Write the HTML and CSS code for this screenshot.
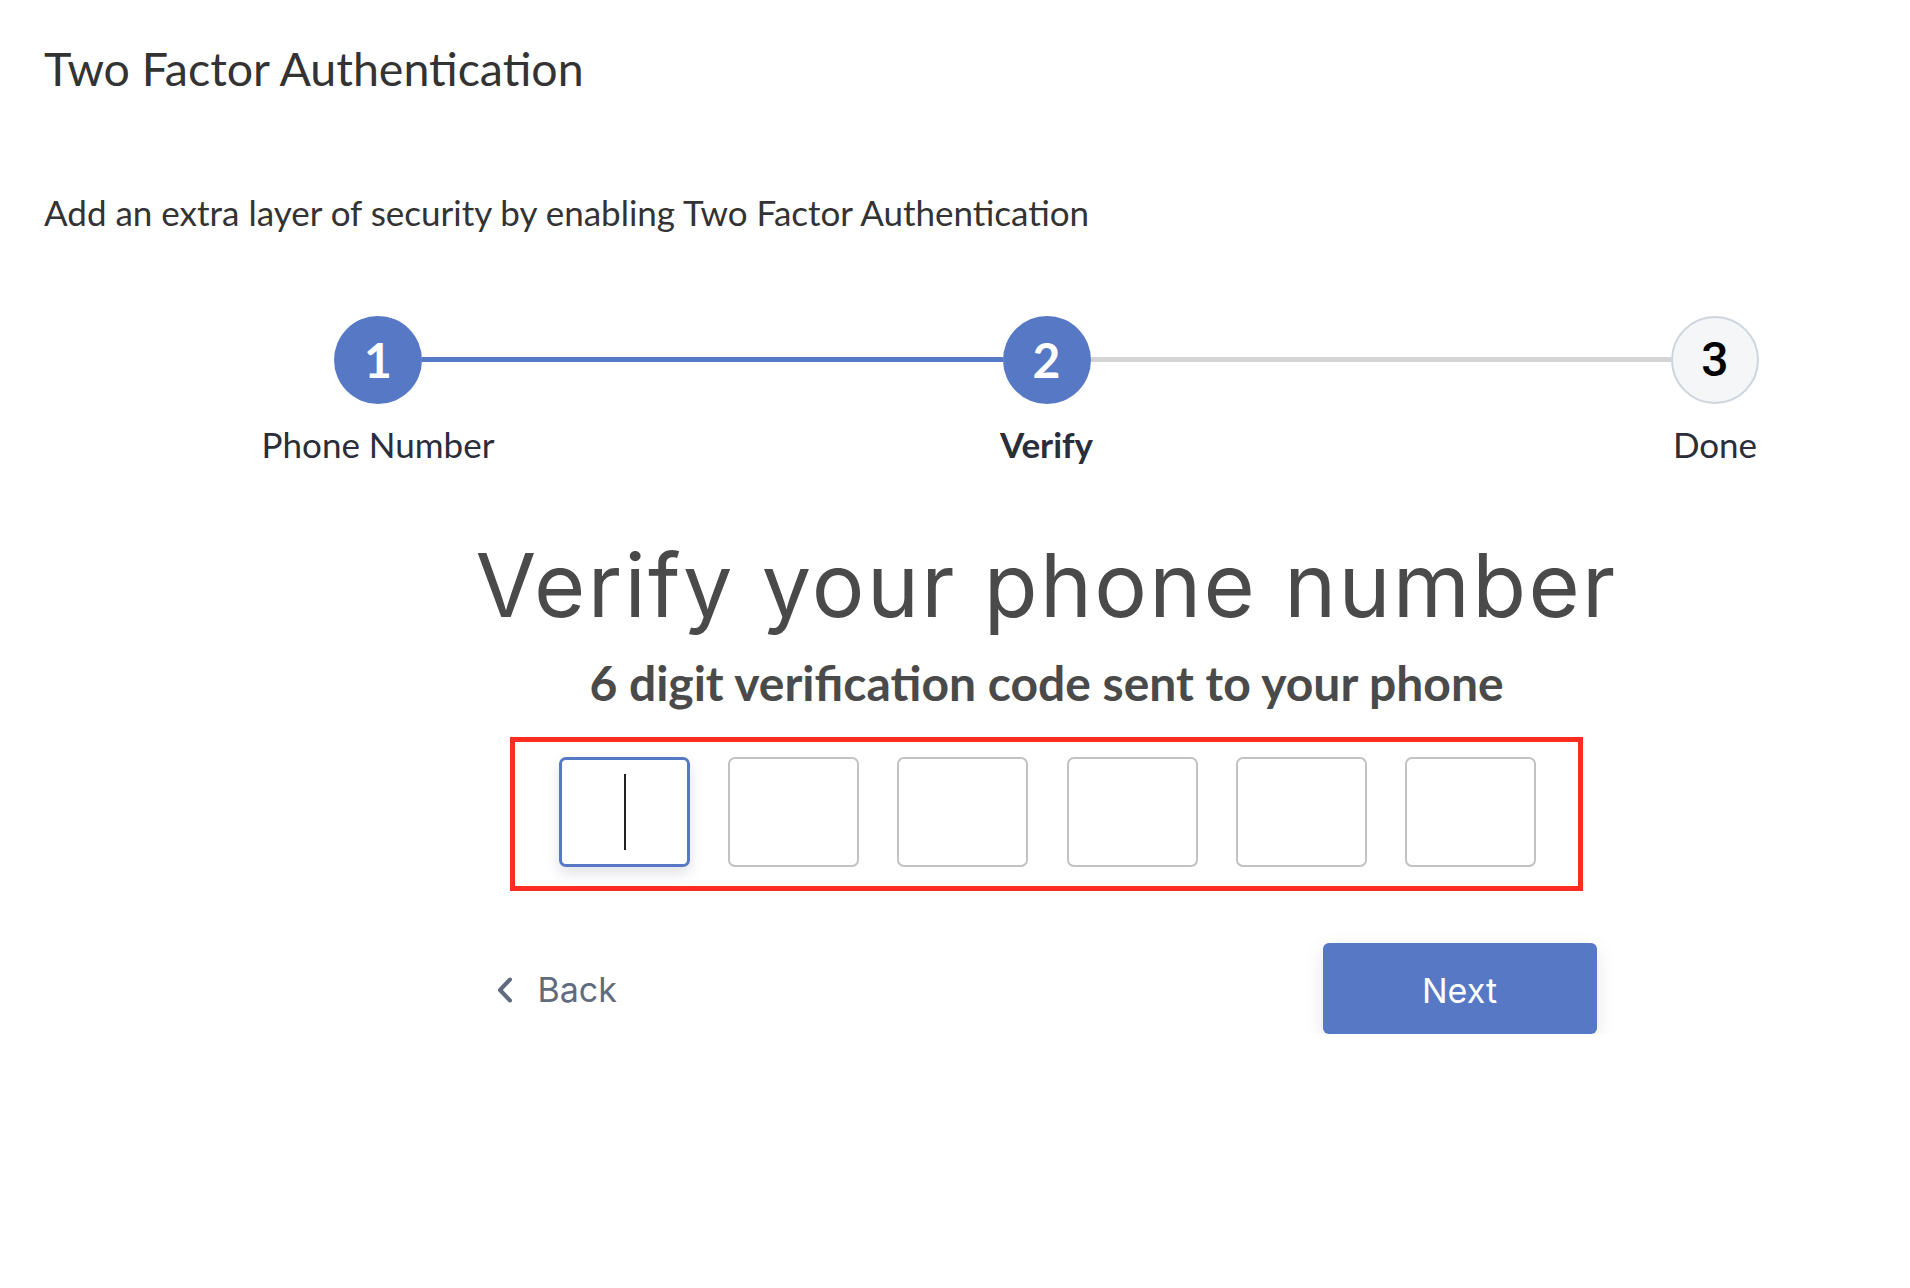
FILE: index.html
```html
<!DOCTYPE html>
<html lang="en">
<head>
<meta charset="utf-8">
<title>Two Factor Authentication</title>
<link rel="stylesheet" href="styles.css">
</head>
<body>
<main class="page">
  <h1 class="page-title">Two Factor Authentication</h1>
  <p class="page-desc">Add an extra layer of security by enabling Two Factor Authentication</p>

  <section class="wizard">
    <ol class="stepper">
      <li class="step step--done">
        <span class="step-circle">1</span>
        <span class="step-label">Phone Number</span>
      </li>
      <li class="connector connector--active"></li>
      <li class="step step--current">
        <span class="step-circle">2</span>
        <span class="step-label">Verify</span>
      </li>
      <li class="connector"></li>
      <li class="step step--todo">
        <span class="step-circle">3</span>
        <span class="step-label">Done</span>
      </li>
    </ol>

    <div class="verify">
      <h2 class="verify-title">Verify your phone number</h2>
      <p class="verify-sub">6 digit verification code sent to your phone</p>

      <div class="code-box">
        <div class="code-cell code-cell--focus"><span class="caret"></span></div>
        <div class="code-cell"></div>
        <div class="code-cell"></div>
        <div class="code-cell"></div>
        <div class="code-cell"></div>
        <div class="code-cell"></div>
      </div>

      <div class="actions">
        <button class="btn-back" type="button">
          <svg class="chev" width="16" height="26" viewBox="0 0 16 26" aria-hidden="true">
            <polyline points="13,2.5 3,13 13,23.5" fill="none" stroke="currentColor" stroke-width="4" stroke-linecap="round" stroke-linejoin="round"/>
          </svg>
          <span>Back</span>
        </button>
        <button class="btn-next" type="button">Next</button>
      </div>
    </div>
  </section>
</main>
</body>
</html>
```

FILE: styles.css
```css
* { box-sizing: border-box; }

body {
  margin: 0;
  background: #ffffff;
  font-family: Lato, "Liberation Sans", sans-serif;
  color: #333333;
}

.page {
  padding: 41px 0 0 44px;
}

.page-title {
  margin: 0;
  font-weight: 400;
  font-size: 46.5px;
  line-height: 1.2;
  color: #333333;
}

.page-desc {
  margin: 94px 0 0;
  font-size: 35px;
  line-height: 1.2;
  color: #333333;
}

.wizard {
  margin: 83px 0 0 214px;
  width: 1577px;
}

/* stepper */
.stepper {
  list-style: none;
  margin: 0;
  padding: 0;
  display: flex;
  align-items: flex-start;
}

.step {
  width: 240px;
  display: flex;
  flex-direction: column;
  align-items: center;
  position: relative;
  z-index: 1;
}

.step-circle {
  width: 88px;
  height: 88px;
  border-radius: 50%;
  display: flex;
  align-items: center;
  justify-content: center;
  font-family: Lato, sans-serif;
  font-weight: 700;
  font-size: 48px;
  line-height: 1;
  color: #ffffff;
  background: #5778c5;
}

.step--todo .step-circle {
  background: #f4f6f8;
  border: 2px solid #cdd5dd;
  color: #000000;
  font-family: Roboto, "Liberation Sans", sans-serif;
  font-weight: 500;
}

.step-label {
  margin-top: 19px;
  font-size: 35px;
  line-height: 1.2;
  color: #2a2d3a;
  white-space: nowrap;
}

.step--current .step-label {
  font-weight: 700;
}

.connector {
  flex: 1;
  height: 5px;
  margin: 41.5px -76px 0;
  background: #d4d4d6;
}

.connector--active {
  background: #5778c5;
}

/* verify */
.verify {
  margin-top: 68px;
  display: flex;
  flex-direction: column;
  align-items: center;
}

.verify-title {
  margin: 0;
  font-family: Inter, "Open Sans", sans-serif;
  font-weight: 400;
  font-size: 88px;
  line-height: 1.2;
  color: #4a4a4a;
  letter-spacing: 2.3px;
}

.verify-sub {
  margin: 16px 0 0;
  font-weight: 700;
  font-size: 48px;
  line-height: 1.2;
  color: #4a4a4a;
}

.code-box {
  margin-top: 25px;
  border: 5px solid #fe2c21;
  padding: 15px 42px 19px 44px;
  display: flex;
  gap: 38.2px;
}

.code-cell {
  width: 131px;
  height: 110px;
  border: 2px solid #c2c2c2;
  border-radius: 7px;
  display: flex;
  align-items: center;
  justify-content: center;
  background: #ffffff;
}

.code-cell--focus {
  border: 3px solid #5778c5;
  box-shadow: 0 6px 14px rgba(60, 70, 110, 0.16);
}

.caret {
  width: 2px;
  height: 76px;
  background: #222222;
}

.actions {
  width: 1100px;
  margin-top: 52px;
  display: flex;
  justify-content: space-between;
  align-items: center;
}

.btn-back {
  display: flex;
  align-items: center;
  gap: 25px;
  padding: 4px 0 0;
  border: 0;
  background: none;
  color: #5f6b7e;
  font-family: Inter, "Open Sans", sans-serif;
  font-size: 34px;
  line-height: 1.2;
  cursor: pointer;
}

.chev { display: block; }

.btn-next {
  width: 274px;
  height: 91px;
  border: 0;
  border-radius: 6px;
  background: #5778c5;
  color: #ffffff;
  font-family: Inter, "Open Sans", sans-serif;
  font-size: 34px;
  padding: 4px 0 0;
  box-shadow: 0 6px 20px rgba(0, 0, 0, 0.1);
  cursor: pointer;
}
```
